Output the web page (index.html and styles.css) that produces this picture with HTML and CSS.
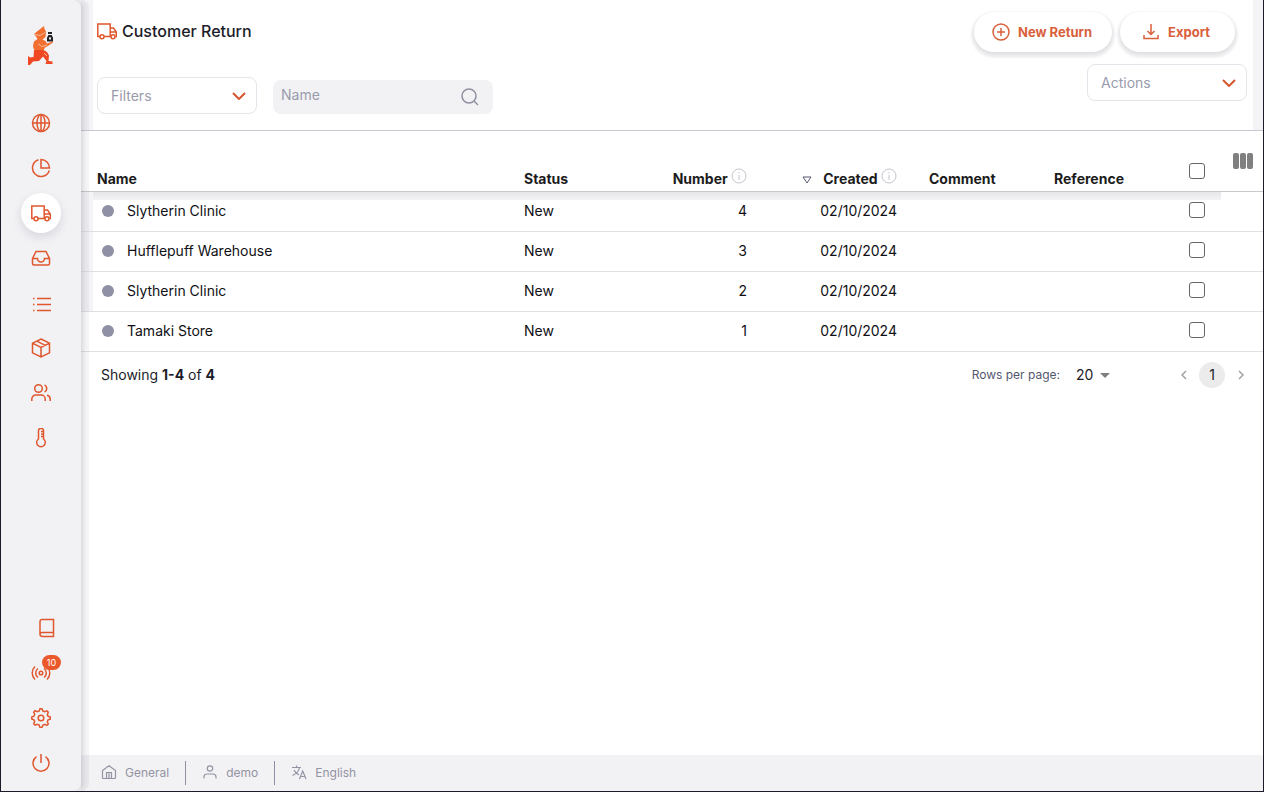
FILE: index.html
```
<!DOCTYPE html>
<html lang="en">
<head>
  <meta charset="UTF-8">
  <meta name="viewport" content="width=device-width, initial-scale=1.0">
  <title>Customer Return</title>
  <link rel="stylesheet" href="styles.css">
</head>
<body>
  <div class="app">
    <aside class="sidebar">
      <a href="#" class="logo" aria-label="Home">
        <svg width="28" height="40" viewBox="0 0 28 40">
          <path fill="#f2702f" d="M17 0l.5 3L19 5.500 18.500 11l-3 2.500 3 1.500 1.500 2.500 5.500-2 .5 1-5 3.500-3 1.500-1.500 3-8 .5-2-2.500-.5-3 1-4 3.500-2.500-1.500-2.500L7 8l3-2.500z"/>
          <path fill="#ef4823" d="M7 24l9.500 0 3.500 2 2 3.500-.5 5.500 4 .5V38h-7l1-3-3.500-4.500-4 4.500-6 .5-3 3.500H1v-9l2 1.500 3.500-.5z"/>
          <path fill="none" stroke="#f7b798" stroke-width="1" d="M8 8.500l5 1 5-3M11 18l4 2.500 5-1.500M17 27l3 3"/>
          <path fill="none" stroke="#222" stroke-width="2" d="M21 7h4M22 10h2l1 2v2.500h-4V12z"/>
        </svg>
      </a>
      <nav class="nav">
        <a href="#" aria-label="World"><svg class="icon" viewBox="0 0 20 20"><circle cx="10" cy="10" r="8.5"/><ellipse cx="10" cy="10" rx="4" ry="8.5"/><path d="M1.500 10h17M10 1.500v17"/></svg></a>
        <a href="#" aria-label="Dashboard"><svg class="icon" viewBox="0 0 20 20"><path d="M7.500 1.700A8.600 8.600 0 1 0 18.300 12.500M10 1.500V10h8.500A8.500 8.500 0 0 0 10 1.500z"/></svg></a>
        <a href="#" class="active" aria-label="Customer return"><svg class="icon" viewBox="0 0 20 20"><path d="M3 15.500H.8V3h12.400v12.500H7M13.200 7h3.300l2.800 4v4.500h-1M13.200 11h6"/><circle cx="5" cy="15.700" r="2"/><circle cx="16" cy="15.700" r="2"/></svg></a>
        <a href="#" aria-label="Inbox"><svg class="icon" viewBox="0 0 20 20"><path d="M1.500 10.500L5 3.500h10l3.500 7v5a1.500 1.500 0 0 1-1.500 1.500H3a1.500 1.500 0 0 1-1.500-1.500zM1.500 10.500h5a3.500 3.500 0 0 0 7 0h5"/></svg></a>
        <a href="#" aria-label="List"><svg class="icon" viewBox="0 0 20 20"><path d="M6 5.500h14M6 11.500h14M6 17.500h14M2 5.500h1.500M2 11.500h1.500M2 17.500h1.500"/></svg></a>
        <a href="#" aria-label="Stock"><svg class="icon" viewBox="0 0 20 20"><path d="M10 1l8.500 4.200v9.600L10 19l-8.500-4.200V5.200zM1.500 5.200L10 9.500l8.500-4.300M10 9.500V19M5.800 3.100l8.500 4.300"/></svg></a>
        <a href="#" aria-label="Users"><svg class="icon" viewBox="0 0 20 20"><circle cx="7.500" cy="5.500" r="3.800"/><path d="M.8 18v-2a4 4 0 0 1 4-4h5.400a4 4 0 0 1 4 4v2M13.500 2a3.800 3.800 0 0 1 0 7M16 12.200a4 4 0 0 1 3.200 4V18"/></svg></a>
        <a href="#" aria-label="Temperature"><svg class="icon" viewBox="0 0 20 20"><path d="M7.500 11V2.500a2 2 0 0 1 2-2h1a2 2 0 0 1 2 2V11a4.300 4.300 0 1 1-5 0zM12.500 3.500H10M12.500 6H10M12.500 8.500H10"/></svg></a>
      </nav>
      <nav class="nav nav-bottom">
        <a href="#" class="docs" aria-label="Docs"><svg class="icon" viewBox="0 0 20 20"><path d="M17.500 18.500H6A2.500 2.500 0 0 1 4 16V3.500a2 2 0 0 1 2-2h11.500zM4 16a2 2 0 0 1 2-1.500h11.500"/></svg></a>
        <a href="#" aria-label="Notifications"><svg class="icon" viewBox="0 0 20 20"><circle cx="10" cy="10" r="1.800"/><path d="M7 5.500a5.500 5.500 0 0 0 0 9M13 5.500a5.500 5.500 0 0 1 0 9M4 3.500a9 9 0 0 0 0 13M16 3.500a9 9 0 0 1 0 13"/></svg><span class="badge">10</span></a>
        <a href="#" aria-label="Settings"><svg class="icon" viewBox="0 0 20 20"><circle cx="10" cy="10" r="2.800"/><path d="M8.200 3L9 .8h2L11.800 3l1.900.8 2.200-1 1.400 1.400-1 2.200.8 1.900 2.200.8v2l-2.200.8-.8 1.900 1 2.200-1.400 1.400-2.200-1-1.900.8-.8 2.200H9L8.200 17l-1.900-.8-2.200 1-1.400-1.400 1-2.200L2.900 11.900.7 11V9l2.200-.8.8-1.900-1-2.200L4.100 2.700l2.200 1z"/></svg></a>
        <a href="#" aria-label="Log out"><svg class="icon" viewBox="0 0 20 20"><path d="M10 1v9M5.500 3.600a8 8 0 1 0 9 0"/></svg></a>
      </nav>
    </aside>

    <main class="main">
      <header class="page-header">
        <div class="header-left">
          <h1 class="title">
            <svg class="icon" viewBox="0 0 20 20"><path d="M3 15.500H.8V3h12.400v12.500H7M13.200 7h3.300l2.800 4v4.500h-1M13.200 11h6"/><circle cx="5" cy="15.700" r="2"/><circle cx="16" cy="15.700" r="2"/></svg>
            Customer Return
          </h1>
          <div class="filters">
            <div class="dropdown">
              <select aria-label="Filters"><option>Filters</option></select>
              <svg class="chevron" viewBox="0 0 14 8"><path d="M1 1l6 6 6-6"/></svg>
            </div>
            <label class="search">
              <input type="text" placeholder="Name" aria-label="Name">
              <svg viewBox="0 0 18 18"><circle cx="8" cy="8" r="7"/><path d="M13 13l4 4"/></svg>
            </label>
          </div>
        </div>
        <div class="header-right">
          <div class="buttons">
            <button type="button" class="btn">
              <svg class="btn-icon" viewBox="0 0 18 18"><circle cx="9" cy="9" r="8"/><path d="M9 5v8M5 9h8"/></svg>
              New Return
            </button>
            <button type="button" class="btn btn-export">
              <svg class="btn-icon" viewBox="0 0 18 18"><path d="M9 1v10M5.500 8L9 11.500 12.500 8M2 12v3.500h14V12"/></svg>
              Export
            </button>
          </div>
          <div class="dropdown">
            <select aria-label="Actions"><option>Actions</option></select>
            <svg class="chevron" viewBox="0 0 14 8"><path d="M1 1l6 6 6-6"/></svg>
          </div>
        </div>
      </header>

      <table class="table">
        <colgroup>
          <col>
          <col class="col-status">
          <col class="col-number">
          <col class="col-created">
          <col class="col-comment">
          <col class="col-reference">
          <col class="col-check">
          <col class="col-config">
        </colgroup>
        <thead>
          <tr>
            <th>Name</th>
            <th>Status</th>
            <th class="right">Number <svg class="info" viewBox="0 0 16 16"><circle cx="8" cy="8" r="7"/><path d="M8 7v5M8 4v1.500"/></svg></th>
            <th class="right"><svg class="sort" viewBox="0 0 10 8"><path d="M1 1h8L5 7z"/></svg>Created <svg class="info" viewBox="0 0 16 16"><circle cx="8" cy="8" r="7"/><path d="M8 7v5M8 4v1.500"/></svg></th>
            <th>Comment</th>
            <th>Reference</th>
            <th class="check check-all"><input type="checkbox" aria-label="Select all"></th>
            <th class="config"><button type="button" aria-label="Columns"><svg viewBox="0 0 20 16"><rect width="6" height="16" rx="2"/><rect x="7" width="6" height="16" rx="2"/><rect x="14" width="6" height="16" rx="2"/></svg></button></th>
          </tr>
        </thead>
        <tbody>
          <tr>
            <td><span class="dot"></span>Slytherin Clinic</td>
            <td>New</td>
            <td class="right">4</td>
            <td class="right">02/10/2024</td>
            <td></td>
            <td></td>
            <td class="check"><input type="checkbox" aria-label="Select return 4"></td>
            <td></td>
          </tr>
          <tr>
            <td><span class="dot"></span>Hufflepuff Warehouse</td>
            <td>New</td>
            <td class="right">3</td>
            <td class="right">02/10/2024</td>
            <td></td>
            <td></td>
            <td class="check"><input type="checkbox" aria-label="Select return 3"></td>
            <td></td>
          </tr>
          <tr>
            <td><span class="dot"></span>Slytherin Clinic</td>
            <td>New</td>
            <td class="right">2</td>
            <td class="right">02/10/2024</td>
            <td></td>
            <td></td>
            <td class="check"><input type="checkbox" aria-label="Select return 2"></td>
            <td></td>
          </tr>
          <tr>
            <td><span class="dot"></span>Tamaki Store</td>
            <td>New</td>
            <td class="right">1</td>
            <td class="right">02/10/2024</td>
            <td></td>
            <td></td>
            <td class="check"><input type="checkbox" aria-label="Select return 1"></td>
            <td></td>
          </tr>
        </tbody>
      </table>

      <div class="pagination">
        <p class="showing">Showing <b>1-4</b> of <b>4</b></p>
        <label for="rows" class="rows-label">Rows per page:</label>
        <div class="rows">
          <select id="rows"><option>20</option></select>
          <svg viewBox="0 0 10 5"><path d="M0 0h10L5 5z"/></svg>
        </div>
        <div class="pages">
          <button type="button" aria-label="Previous page"><svg viewBox="0 0 6 10"><path d="M5 1L1 5l4 4"/></svg></button>
          <button type="button" class="current">1</button>
          <button type="button" aria-label="Next page"><svg viewBox="0 0 6 10"><path d="M1 1l4 4-4 4"/></svg></button>
        </div>
      </div>

      <footer class="footer">
        <a href="#"><svg viewBox="0 0 16 16"><path d="M1.500 5.500L8 .8l6.500 4.700v7a1 1 0 0 1-1 1h-11a1 1 0 0 1-1-1zM5.500 13.500V7.500h5v6M8 8v5"/></svg>General</a>
        <a href="#"><svg viewBox="0 0 16 16"><circle cx="8" cy="3.500" r="2.700"/><path d="M2 13.500v-1.500a3 3 0 0 1 3-3h6a3 3 0 0 1 3 3v1.500"/></svg>demo</a>
        <a href="#"><svg viewBox="0 0 16 16"><path d="M1 2.500h9M5.500.5v2M8.500 2.500C8 6 4.500 9 1.500 10.500M3 5c1 2.500 3 4 5 5M8.500 14l3.200-8 3.300 8M9.500 11.500H14"/></svg>English</a>
      </footer>
    </main>
  </div>
</body>
</html>
```
FILE: styles.css
```
* {
  box-sizing: border-box;
}
body {
  margin: 0;
  font: 14px/20px Inter, "Liberation Sans", sans-serif;
  color: #1c1c28;
  background: #fff;
}
a {
  text-decoration: none;
}
svg {
  flex: none;
  fill: none;
  stroke: currentColor;
}
button, input, select {
  font: inherit;
  color: inherit;
}
button {
  padding: 0;
  border: 0;
  background: none;
  cursor: pointer;
}
.app {
  display: flex;
  min-height: 100vh;
  border: solid #1c1c28;
  border-width: 0 1px 1px;
}

/* sidebar */
.sidebar {
  position: relative;
  z-index: 1;
  flex: none;
  width: 80px;
  display: flex;
  flex-direction: column;
  padding-bottom: 5px;
  background: #f2f2f5;
  border-radius: 0 8px 8px 0;
  box-shadow: 2px 0 4px rgba(40, 41, 61, .14), 8px 0 0 rgba(96, 97, 112, .07);
}
.logo {
  display: flex;
  justify-content: center;
  height: 101px;
  padding-top: 26px;
}
.logo svg {
  stroke: none;
}
.nav {
  display: flex;
  flex-direction: column;
  align-items: center;
  color: #e0572e;
}
.nav a {
  position: relative;
  display: flex;
  align-items: center;
  justify-content: center;
  width: 40px;
  height: 40px;
  margin: 2px 0 3px;
  border-radius: 50%;
  color: inherit;
}
.nav .active {
  background: #fff;
  box-shadow: 0 4px 10px rgba(96, 97, 112, .18);
}
.nav-bottom {
  margin-top: auto;
}
.nav .docs {
  padding-left: 10px;
}
.icon {
  width: 20px;
  height: 20px;
  stroke-width: 1.5;
}
.badge {
  position: absolute;
  top: 2px;
  right: 0;
  width: 19px;
  height: 15px;
  border-radius: 8px;
  background: #e9592b;
  color: #fff;
  font-size: 9px;
  line-height: 15px;
  text-align: center;
}

/* header */
.main {
  flex: 1;
  min-width: 0;
  display: flex;
  flex-direction: column;
}
.page-header {
  display: flex;
  justify-content: space-between;
  padding: 0 16px 16px;
  border-bottom: 1px solid #c7c9d1;
  background: linear-gradient(90deg, #f4f4f7 12px, #fff 12px, #fff calc(100% - 10px), #f4f4f7 calc(100% - 10px));
}
.title {
  display: flex;
  align-items: center;
  gap: 5px;
  margin: 18px 0 33px;
  font-size: 16px;
  line-height: 26px;
  font-weight: 500;
}
.title .icon {
  color: #e0572e;
}
.filters {
  display: flex;
  align-items: flex-end;
  gap: 16px;
}
.dropdown {
  position: relative;
  width: 160px;
  color: #9a9bad;
}
.dropdown select {
  display: block;
  width: 100%;
  height: 37px;
  padding: 0 32px 0 13px;
  border: 1px solid #e4e4eb;
  border-radius: 8px;
  background: #fff;
  appearance: none;
}
.chevron {
  position: absolute;
  right: 11px;
  top: 15px;
  width: 14px;
  height: 8px;
  stroke: #d4572f;
  stroke-width: 2;
  pointer-events: none;
}
.search {
  display: flex;
  align-items: center;
  width: 220px;
  height: 34px;
  padding: 0 14px 0 8px;
  border-radius: 8px;
  background: #f2f2f5;
  color: #8f90a0;
}
.search input {
  flex: 1;
  min-width: 0;
  padding: 0 0 4px;
  border: 0;
  background: none;
  outline: none;
}
.search input::placeholder {
  color: #9a9bad;
}
.search svg {
  width: 18px;
  height: 18px;
  stroke-width: 1.5;
}
.header-right {
  display: flex;
  flex-direction: column;
  align-items: flex-end;
  gap: 12px;
  padding-top: 12px;
}
.buttons {
  display: flex;
  gap: 8px;
  margin-right: 12px;
}
.btn {
  display: flex;
  align-items: center;
  gap: 8px;
  height: 40px;
  padding: 0 20px 0 18px;
  border-radius: 20px;
  background: #fff;
  box-shadow: 0 2px 4px rgba(96, 97, 112, .18), 0 3px 2px 3px rgba(96, 97, 112, .07);
  color: #d9603b;
  font-size: 13px;
  font-weight: 700;
}
.btn-export {
  padding: 0 25px 0 22px;
}
.btn-icon {
  width: 18px;
  height: 18px;
  stroke-width: 1.5;
}

/* table */
.table {
  width: 100%;
  table-layout: fixed;
  border-collapse: separate;
  border-spacing: 0;
  color: #101014;
}
.col-status { width: 128px; }
.col-number { width: 127px; }
.col-created { width: 150px; }
.col-comment { width: 125px; }
.col-reference { width: 135px; }
.col-check { width: 48px; }
.col-config { width: 42px; }
.table th {
  height: 61px;
  padding: 0 16px 2px;
  border-bottom: 1px solid #c7c9cc;
  font-weight: 700;
  text-align: left;
  vertical-align: bottom;
  white-space: nowrap;
  color: #1c1c1c;
}
.table td {
  height: 40px;
  padding: 0 16px 2px;
  border-bottom: 1px solid #e0e0e3;
}
.table tbody tr:first-child td:not(:last-child) {
  background: linear-gradient(#e6e6e8, #f3f3f5 8px, #fff 8px);
}
.table tbody tr:not(:last-child) td:first-child {
  box-shadow: inset 12px 0 0 #f4f4f7;
}
.table .right {
  text-align: right;
}
.table .check {
  padding: 0 0 3px;
}
.table .check-all {
  padding-bottom: 12px;
}
.table .config {
  padding: 0 10px 22px 12px;
}
.config button {
  display: block;
  width: 20px;
  height: 16px;
  color: #808080;
}
.config svg {
  display: block;
  fill: currentColor;
  stroke: none;
}
.check input {
  display: block;
  width: 16px;
  height: 16px;
  margin: 0 auto;
  border: 1px solid #666;
  border-radius: 3px;
  background: #fff;
  appearance: none;
}
.check input:checked {
  background: #e45c33;
}
.info {
  width: 16px;
  height: 16px;
  color: #c3c3cc;
}
.sort {
  width: 10px;
  height: 8px;
  margin-right: 11px;
  color: #555770;
}
.dot {
  display: inline-block;
  width: 12px;
  height: 12px;
  margin: 0 13px 0 5px;
  border-radius: 50%;
  background: #8f90a6;
  vertical-align: -1px;
}

/* pagination */
.pagination {
  display: flex;
  align-items: center;
  padding: 10px 15px 10px 20px;
}
.showing {
  margin: 0 auto 0 0;
}
.rows-label {
  font-size: 12px;
  color: #555770;
}
.rows {
  position: relative;
  margin: 0 66px 0 16px;
}
.rows select {
  display: block;
  width: 34px;
  height: 20px;
  padding: 0;
  border: 0;
  background: none;
  appearance: none;
}
.rows svg {
  position: absolute;
  right: 0;
  top: 8px;
  width: 10px;
  height: 5px;
  fill: #808080;
  stroke: none;
  pointer-events: none;
}
.pages {
  display: flex;
  align-items: center;
  color: #a0a0a6;
}
.pages button {
  display: flex;
  align-items: center;
  justify-content: center;
  width: 15px;
  height: 26px;
}
.pages svg {
  width: 6px;
  height: 10px;
  stroke-width: 1.5;
}
.pages .current {
  width: 26px;
  margin: 0 8px;
  border-radius: 50%;
  background: #ebebeb;
  color: #1c1c28;
}

/* footer */
.footer {
  display: flex;
  align-items: center;
  height: 36px;
  margin-top: auto;
  padding-left: 4px;
  background: #f2f2f5;
  font-size: 12px;
}
.footer a {
  display: flex;
  align-items: center;
  gap: 8px;
  height: 24px;
  padding: 0 16px;
  color: #9293a3;
}
.footer a + a {
  border-left: 1px solid #8f90a6;
}
.footer svg {
  width: 16px;
  height: 16px;
  stroke-width: 1.2;
}
```
